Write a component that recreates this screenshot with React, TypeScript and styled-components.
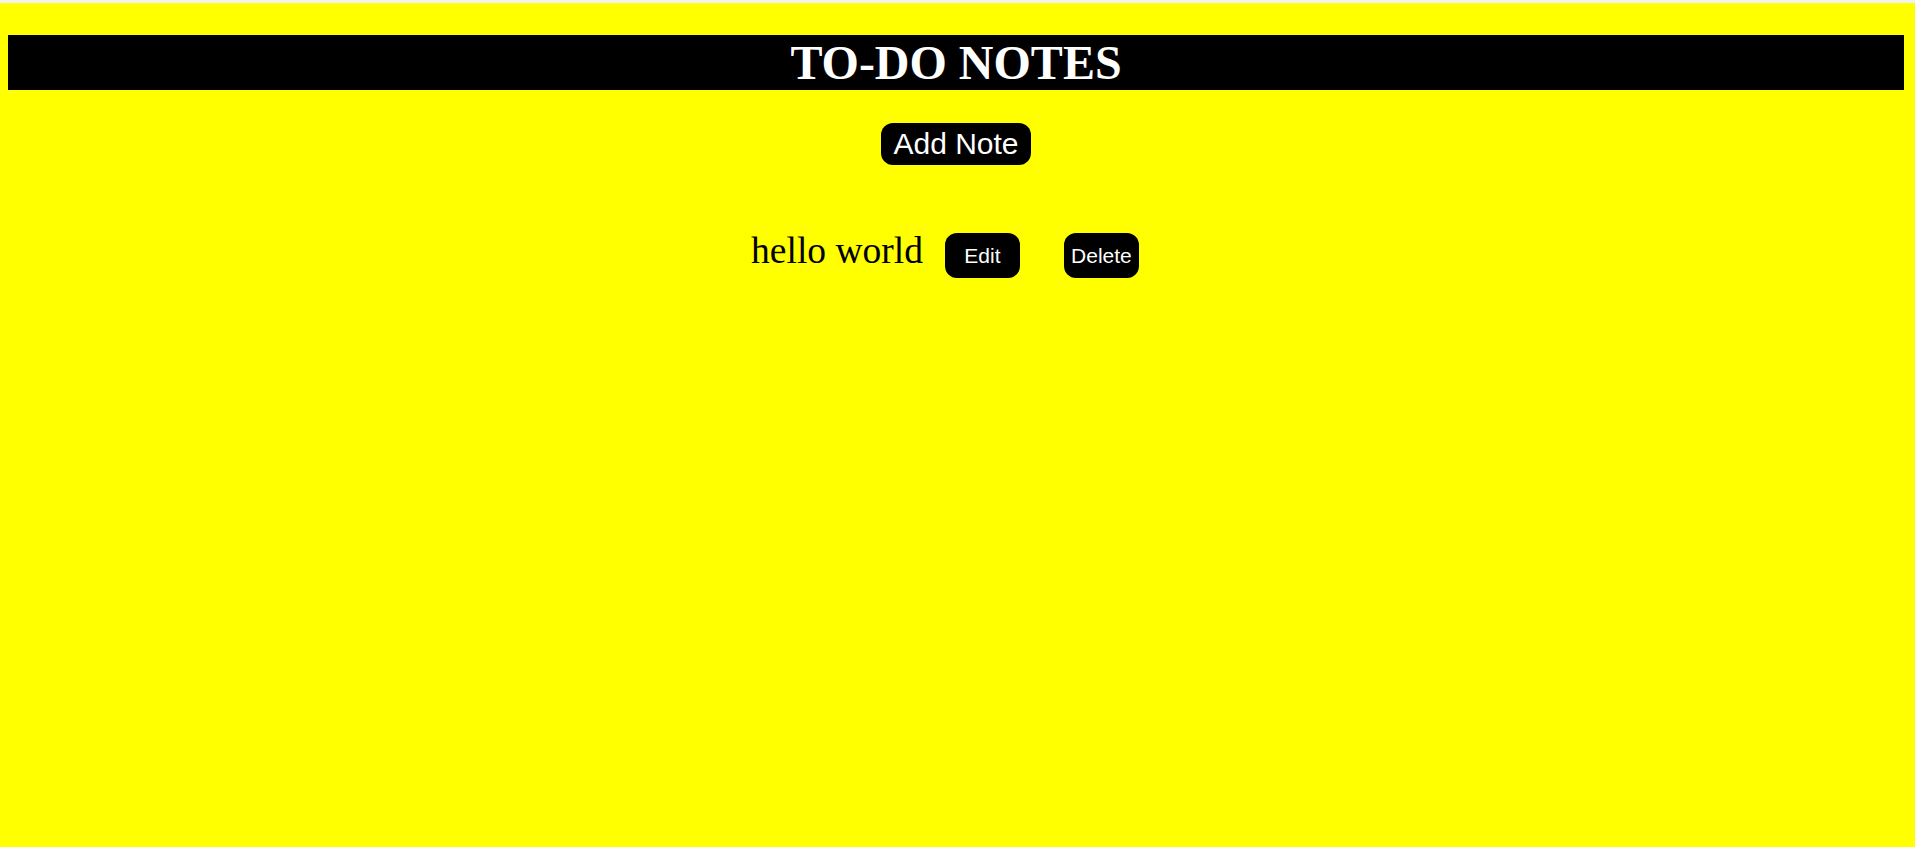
import React from 'react';
import styled, { createGlobalStyle } from 'styled-components';

const GlobalStyle = createGlobalStyle`
    html, body {
        margin: 0;
        padding: 0;
        background-color: #ffff00;
    }
    body {
        font-family: "Liberation Serif", "Times New Roman", serif;
    }
`;

const Page = styled.div`
    min-height: 844px;
    border-top: 3px solid #f2f2f5;
    padding: 0 11px 0 8px;
    display: flex;
    flex-direction: column;
    align-items: center;
`;

const Title = styled.h1`
    align-self: stretch;
    margin: 32px 0 0;
    background-color: #000;
    color: #fff;
    font-family: "Liberation Serif", "Times New Roman", serif;
    font-size: 48px;
    font-weight: bold;
    line-height: 55px;
    text-align: center;
`;

const AddButton = styled.button`
    margin-top: 33px;
    padding: 4px 12px;
    border: none;
    border-radius: 12px;
    background-color: #000;
    color: #fff;
    font-family: "Liberation Sans", Arial, sans-serif;
    font-size: 30px;
    cursor: pointer;
`;

const NoteRow = styled.div`
    margin-top: 64px;
    display: flex;
    align-items: baseline;
`;

const NoteText = styled.span`
    font-family: "Liberation Serif", "Times New Roman", serif;
    font-size: 37.5px;
    color: #000;
`;

const SmallButton = styled.button`
    width: 75px;
    margin: 0 22px;
    padding: 11px 0;
    border: none;
    border-radius: 12px;
    background-color: #000;
    color: #fff;
    font-family: "Liberation Sans", Arial, sans-serif;
    font-size: 21px;
    line-height: 23px;
    text-align: center;
    cursor: pointer;
`;

function App() {
    const [notes, setNotes] = React.useState<string[]>(['hello world']);

    function addNote() {
        const text = window.prompt('New note');
        if (text) setNotes([...notes, text]);
    }

    function editNote(index: number) {
        const text = window.prompt('Edit note', notes[index]);
        if (text === null) return;
        const copy = [...notes];
        copy[index] = text;
        setNotes(copy);
    }

    function deleteNote(index: number) {
        const copy = [...notes];
        copy.splice(index, 1);
        setNotes(copy);
    }

    return (
        <Page>
            <GlobalStyle />
            <Title>TO-DO NOTES</Title>
            <AddButton onClick={addNote}>Add Note</AddButton>
            {notes.map((text, i) => (
                <NoteRow key={i}>
                    <NoteText>{text}</NoteText>
                    <SmallButton onClick={() => editNote(i)}>Edit</SmallButton>
                    <SmallButton onClick={() => deleteNote(i)}>Delete</SmallButton>
                </NoteRow>
            ))}
        </Page>
    );
}

export default App;
